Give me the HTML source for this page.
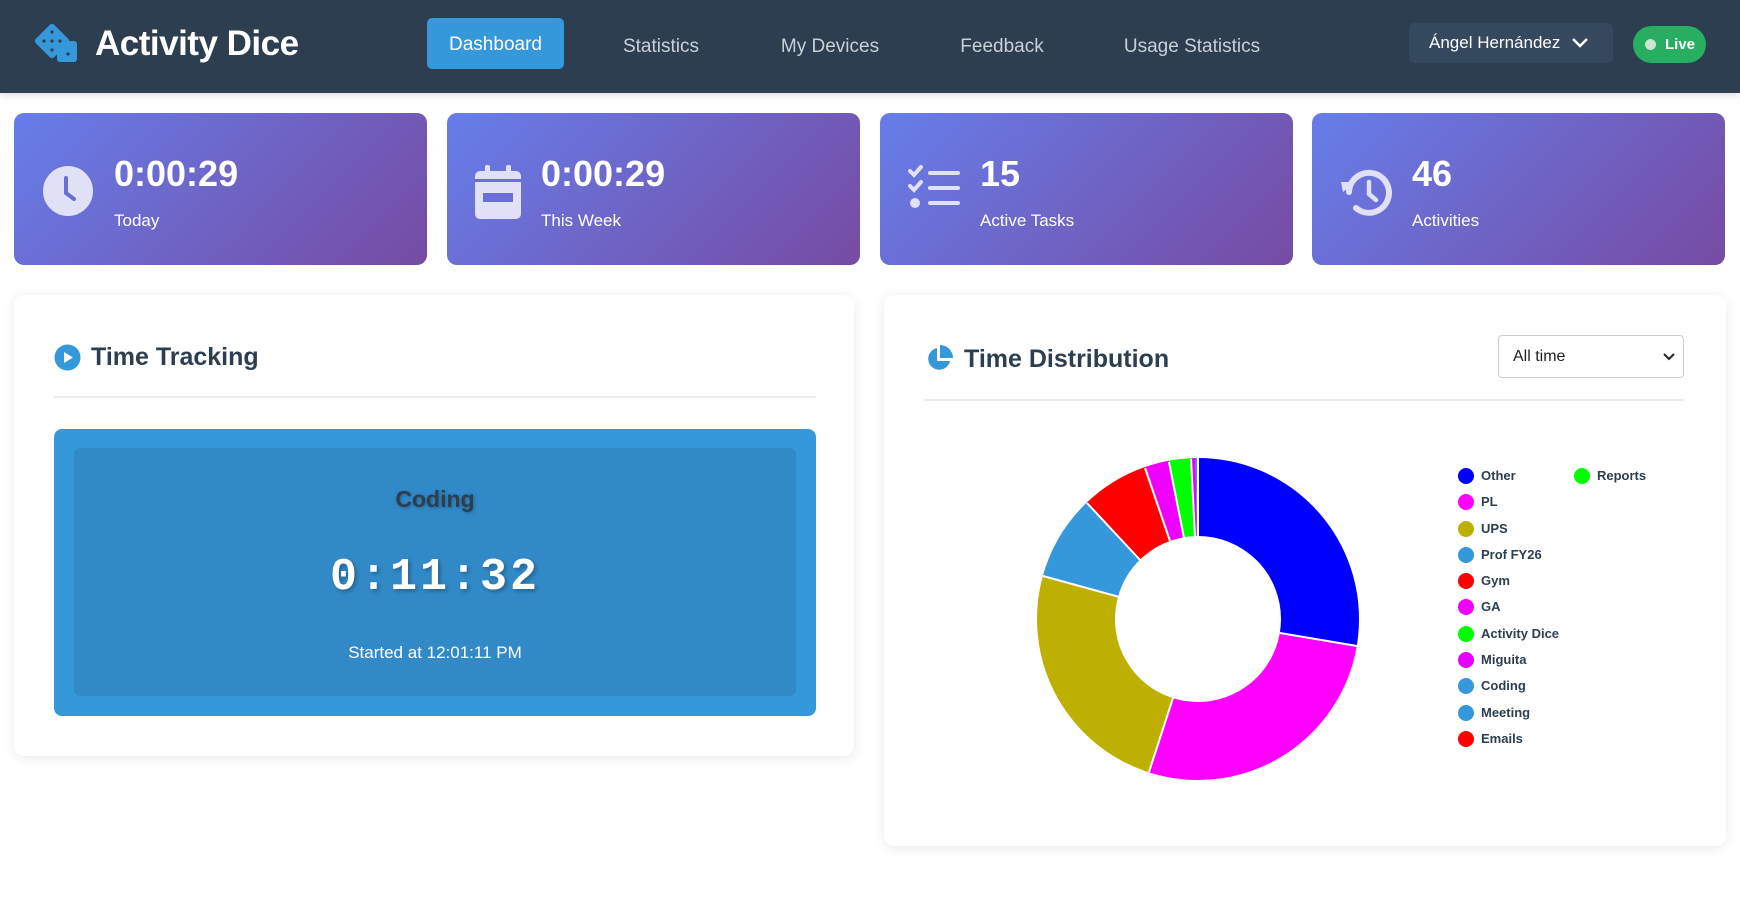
<!DOCTYPE html>
<html><head><meta charset="utf-8"><style>
*{box-sizing:border-box;margin:0;padding:0}
body{width:1740px;height:897px;background:#fff;font-family:"Liberation Sans",sans-serif;position:relative;overflow:hidden;color:#2c3e50}
.nav{position:absolute;left:0;top:0;width:1740px;height:93px;background:#2c3e50;box-shadow:0 2px 8px rgba(0,0,0,.15)}
.abs{position:absolute}
.logo{left:95px;top:24px;font-size:35px;font-weight:bold;color:#fff;letter-spacing:-0.5px}
.btn{left:427px;top:18px;width:137px;height:51px;background:#3498db;border-radius:5px;color:#fff;font-size:19px;line-height:54px;text-align:center}
.ni{top:36px;color:#c8d0d8;font-size:19px;transform:translateX(-50%)}
.user{left:1409px;top:23px;width:204px;height:40px;background:#34495e;border-radius:5px;color:#fff;font-size:17px;line-height:40px;padding-left:20px}
.live{left:1633px;top:26px;width:73px;height:37px;background:#27ae60;border-radius:19px;color:#fff;font-size:15px;font-weight:bold;line-height:37px;padding-left:32px}
.live:before{content:"";position:absolute;left:12px;top:13px;width:11px;height:11px;border-radius:50%;background:#c8e6d0}
.card{top:113px;width:413px;height:152px;border-radius:10px;background:linear-gradient(135deg,#667eea,#764ba2);color:#fff}
.card .v{position:absolute;left:100px;top:40px;font-size:36px;font-weight:bold}
.card .l{position:absolute;left:100px;top:98px;font-size:17px}
.card svg{position:absolute;left:28px;top:52px}
.panel{background:#fff;border-radius:10px;box-shadow:0 2px 12px rgba(0,0,0,.09)}
.h{font-size:25px;font-weight:bold;color:#2c3e50}
.hr{height:2px;background:#e8ecef}
.lg span{display:inline-block;width:16px;height:16px;border-radius:50%;vertical-align:-4px;margin-right:7px}
</style></head><body>
<div class="nav"></div>
<svg class="abs" style="left:33px;top:24px" width="52" height="42" viewBox="0 0 52 42">
<rect x="6" y="4" width="26" height="26" rx="3" transform="rotate(45 19 17)" fill="#3498db"/>
<rect x="24" y="17" width="20" height="21" rx="3" fill="#3498db"/>
<g fill="#2c3e50"><circle cx="19" cy="8" r="1.6"/><circle cx="11" cy="17" r="1.6"/><circle cx="19" cy="17" r="1.6"/><circle cx="27" cy="17" r="1.6"/><circle cx="19" cy="26" r="1.6"/><circle cx="35" cy="30" r="1.6"/></g></svg>
<div class="abs logo">Activity Dice</div>
<div class="abs btn">Dashboard</div>
<div class="abs ni" style="left:661px">Statistics</div>
<div class="abs ni" style="left:830px">My Devices</div>
<div class="abs ni" style="left:1002px">Feedback</div>
<div class="abs ni" style="left:1192px">Usage Statistics</div>
<div class="abs user">Ángel Hernández <svg width="18" height="12" style="margin-left:6px" viewBox="0 0 18 12"><path d="M2 3l7 7 7-7" stroke="#fff" stroke-width="2.5" fill="none"/></svg></div>
<div class="abs live">Live</div>

<div class="abs card" style="left:14px"><svg width="52" height="52" viewBox="0 0 52 52"><circle cx="26" cy="26" r="25" fill="#e0e0f7"/><path d="M24 13v15l8 6" stroke="#6a6fd6" stroke-width="4" fill="none" stroke-linecap="round"/></svg><div class="v">0:00:29</div><div class="l">Today</div></div>
<div class="abs card" style="left:447px"><svg width="46" height="54" viewBox="0 0 46 54"><rect x="10" y="0" width="5" height="9" rx="2" fill="#e0e0f7"/><rect x="31" y="0" width="5" height="9" rx="2" fill="#e0e0f7"/><rect x="0" y="6" width="46" height="48" rx="5" fill="#e0e0f7"/><rect x="0" y="14" width="46" height="3" fill="#6a6fd6"/><rect x="8" y="28" width="30" height="9" fill="#6a6fd6"/></svg><div class="v" style="left:94px">0:00:29</div><div class="l" style="left:94px">This Week</div></div>
<div class="abs card" style="left:880px"><svg width="52" height="46" viewBox="0 0 52 46"><g fill="none" stroke="#e0e0f7" stroke-width="4" stroke-linecap="round"><path d="M2 6l4 4 7-8M2 21l4 4 7-8"/><path d="M22 8h28M22 23h28M22 38h28"/></g><circle cx="7" cy="38" r="5" fill="#e0e0f7"/></svg><div class="v">15</div><div class="l">Active Tasks</div></div>
<div class="abs card" style="left:1312px"><svg width="54" height="54" viewBox="0 0 54 54"><path d="M9 27A20 20 0 1 1 16 43" stroke="#e0e0f7" stroke-width="6" fill="none" stroke-linecap="round"/><path d="M1 17h14l-12 10z" fill="#e0e0f7"/><path d="M29 17v12l7 6" stroke="#e0e0f7" stroke-width="4.5" fill="none" stroke-linecap="round"/></svg><div class="v">46</div><div class="l">Activities</div></div>

<div class="abs panel" style="left:14px;top:295px;width:840px;height:461px"></div>
<svg class="abs" style="left:54px;top:344px" width="27" height="27" viewBox="0 0 27 27"><circle cx="13.5" cy="13.5" r="13" fill="#3498db"/><path d="M10 8v11l9-5.5z" fill="#fff"/></svg>
<div class="abs h" style="left:91px;top:343px">Time Tracking</div>
<div class="abs hr" style="left:54px;top:396px;width:762px"></div>
<div class="abs" style="left:54px;top:429px;width:762px;height:287px;background:#3498db;border-radius:8px"></div>
<div class="abs" style="left:74px;top:448px;width:722px;height:248px;background:#318ac7;border-radius:6px;text-align:center;color:#fff">
<div style="margin-top:38px;font-size:23px;font-weight:bold;color:#2c3e50;text-shadow:1px 1px 3px rgba(0,0,0,.3)">Coding</div>
<div style="margin-top:39px;font-family:'Liberation Mono',monospace;font-size:45px;font-weight:bold;letter-spacing:3px;text-shadow:2px 2px 4px rgba(0,0,0,.3)">0:11:32</div>
<div style="margin-top:40px;font-size:17px">Started at 12:01:11 PM</div></div>

<div class="abs panel" style="left:884px;top:295px;width:842px;height:551px"></div>
<svg class="abs" style="left:925px;top:345px" width="28" height="28" viewBox="0 0 28 28"><path d="M12 3A11 11 0 1 0 25 16H12z" fill="#3498db"/><path d="M15 0A13 13 0 0 1 28 13H15z" fill="#3498db"/></svg>
<div class="abs h" style="left:964px;top:345px">Time Distribution</div>
<div class="abs" style="left:1498px;top:335px;width:186px;height:43px;border:1px solid #ccc;border-radius:4px;font-size:16px;line-height:41px;padding-left:14px;color:#222">All time<svg style="position:absolute;right:8px;top:16px" width="12" height="9" viewBox="0 0 12 9"><path d="M1 2l5 5 5-5" stroke="#222" stroke-width="2" fill="none"/></svg></div>
<div class="abs hr" style="left:924px;top:399px;width:760px"></div>
<svg class="abs" style="left:1037px;top:458px" width="322" height="322" viewBox="0 0 322 322">
<g transform="rotate(-90 161 161)" fill="none" stroke-width="78">
<circle cx="161" cy="161" r="122" stroke="#0000ff" stroke-dasharray="212.1 900" stroke-dashoffset="0"/>
<circle cx="161" cy="161" r="122" stroke="#ff00ff" stroke-dasharray="208.7 900" stroke-dashoffset="-212.1"/>
<circle cx="161" cy="161" r="122" stroke="#bdb000" stroke-dasharray="186.5 900" stroke-dashoffset="-420.8"/>
<circle cx="161" cy="161" r="122" stroke="#3498db" stroke-dasharray="65.6 900" stroke-dashoffset="-607.3"/>
<circle cx="161" cy="161" r="122" stroke="#ff0000" stroke-dasharray="53.2 900" stroke-dashoffset="-672.9"/>
<circle cx="161" cy="161" r="122" stroke="#ee00ff" stroke-dasharray="18.3 900" stroke-dashoffset="-726.1"/>
<circle cx="161" cy="161" r="122" stroke="#00ff00" stroke-dasharray="17 900" stroke-dashoffset="-744.4"/>
<circle cx="161" cy="161" r="122" stroke="#e600ff" stroke-dasharray="3 900" stroke-dashoffset="-761.4"/>
<circle cx="161" cy="161" r="122" stroke="#3498db" stroke-dasharray="2 900" stroke-dashoffset="-764.4"/>
</g>
<g stroke="#fff" stroke-width="2">
<line x1="161" y1="0" x2="161" y2="78"/>
<line x1="320" y1="188" x2="243" y2="175"/>
<line x1="112" y1="314" x2="136" y2="240"/>
<line x1="6" y1="118" x2="86" y2="140"/>
<line x1="50" y1="45" x2="104" y2="103"/>
<line x1="108" y1="10" x2="133" y2="83"/>
<line x1="132" y1="4" x2="147" y2="80"/>
<line x1="154" y1="1" x2="158" y2="79"/>
</g></svg>
<div class="abs lg" style="left:1458px;top:463px;font-size:13px;font-weight:bold;color:#2c3e50;line-height:26.3px">
<div><span style="background:#0000ff"></span>Other</div>
<div><span style="background:#ff00ff"></span>PL</div>
<div><span style="background:#bdb000"></span>UPS</div>
<div><span style="background:#3498db"></span>Prof FY26</div>
<div><span style="background:#ff0000"></span>Gym</div>
<div><span style="background:#ee00ff"></span>GA</div>
<div><span style="background:#00ff00"></span>Activity Dice</div>
<div><span style="background:#e600ff"></span>Miguita</div>
<div><span style="background:#3498db"></span>Coding</div>
<div><span style="background:#3498db"></span>Meeting</div>
<div><span style="background:#ff0000"></span>Emails</div>
</div>
<div class="abs lg" style="left:1574px;top:463px;font-size:13px;font-weight:bold;color:#2c3e50;line-height:26.3px"><span style="background:#00ff00"></span>Reports</div>
</body></html>
